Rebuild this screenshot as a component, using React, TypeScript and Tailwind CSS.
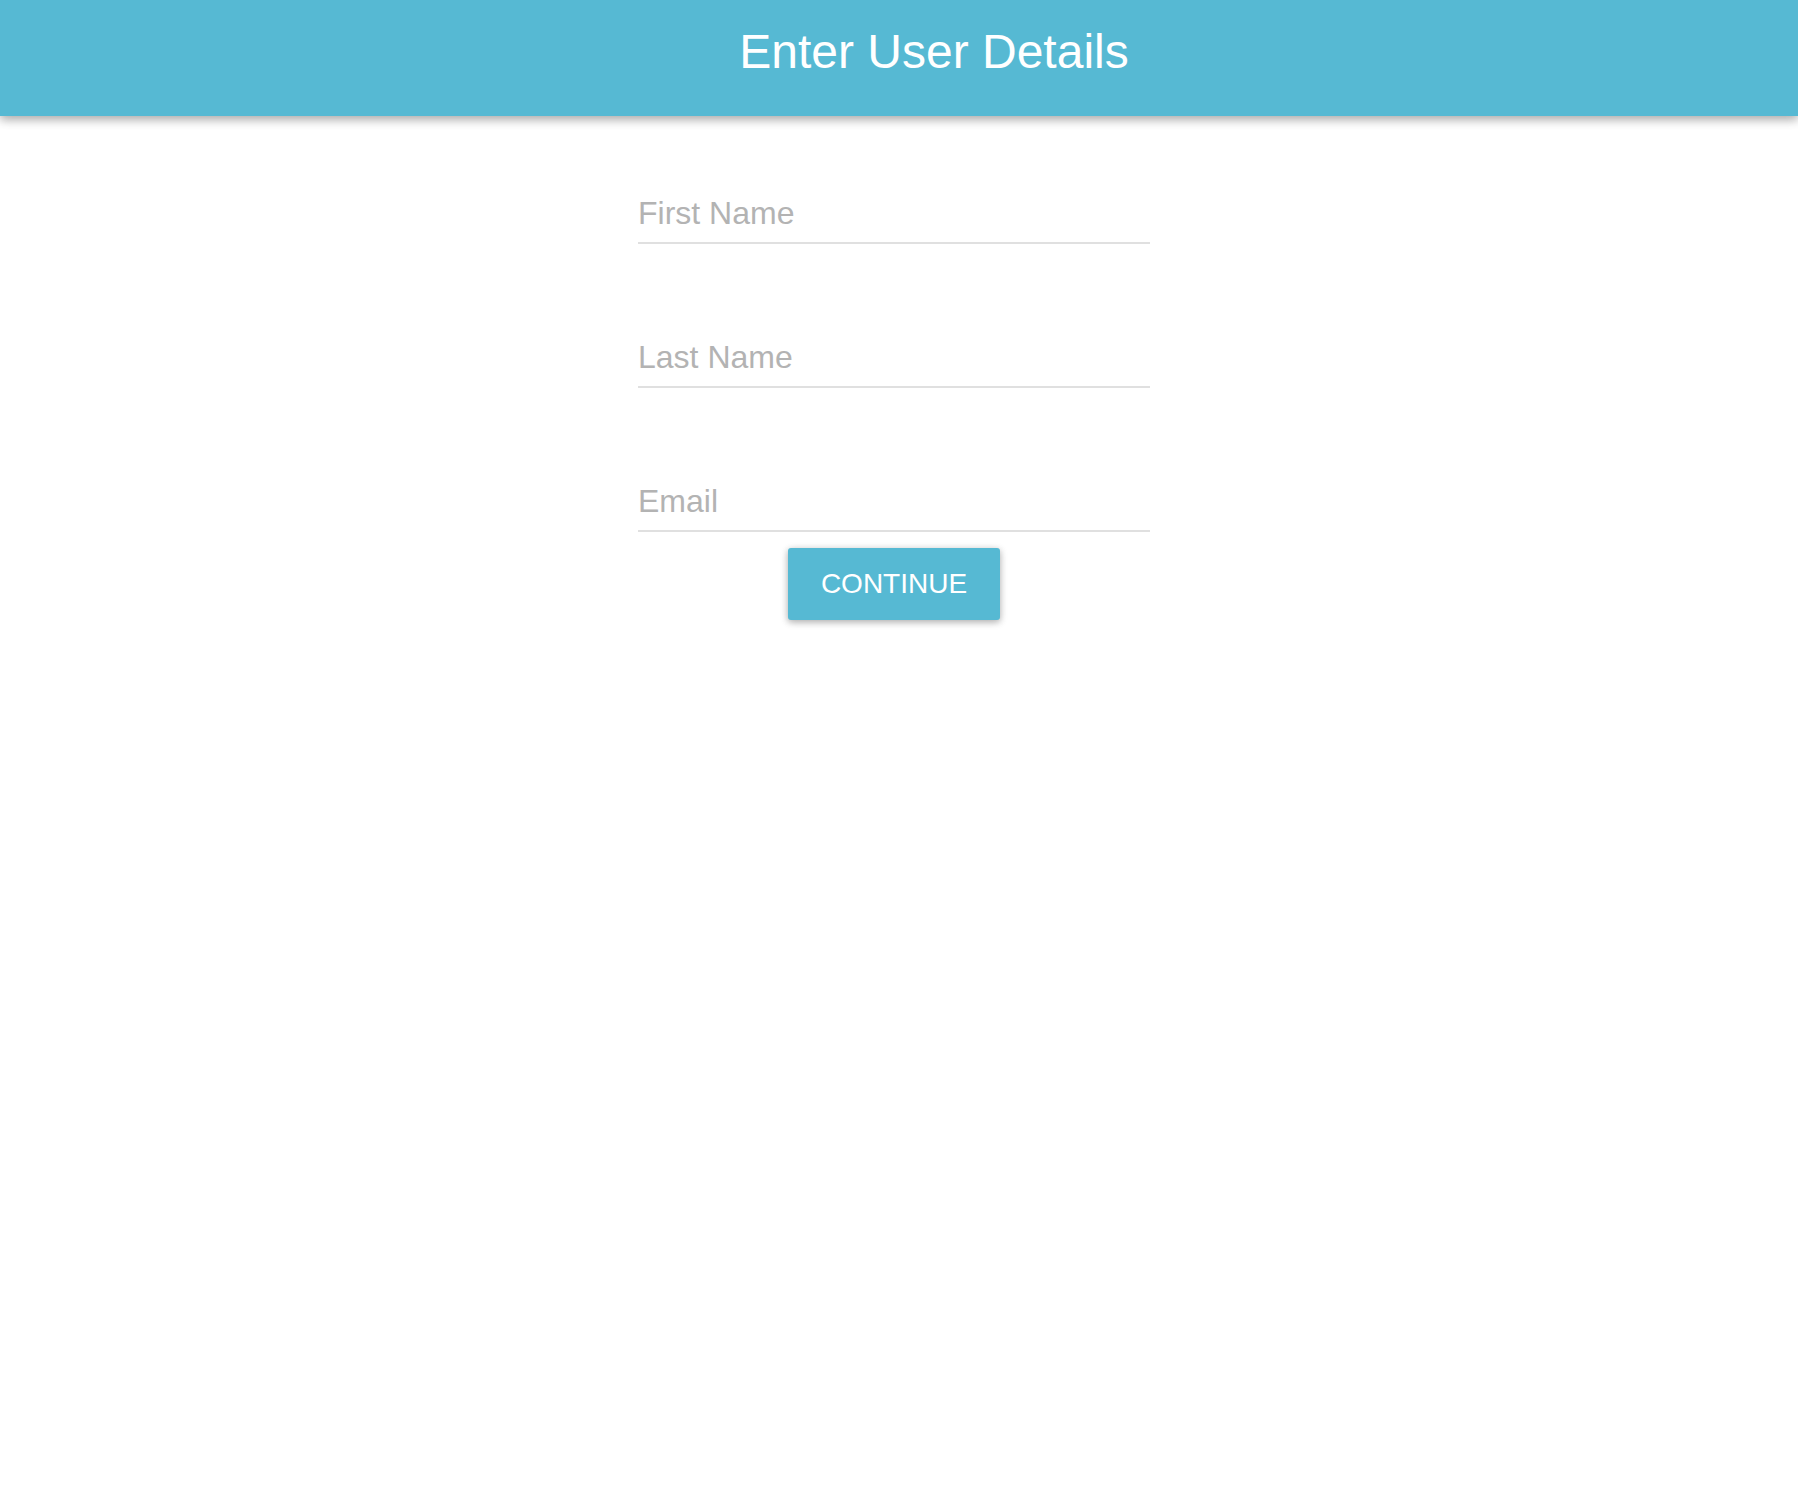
import React from 'react'

const fields = [
  { name: 'firstName', label: 'First Name', type: 'text' },
  { name: 'lastName', label: 'Last Name', type: 'text' },
  { name: 'email', label: 'Email', type: 'email' },
]

export default function App() {
  return (
    <div
      className="min-h-screen bg-white"
      style={{ fontFamily: 'Helvetica, "Liberation Sans", Arial, sans-serif' }}
    >
      {/* App bar */}
      <header className="h-[116px] bg-[#56b9d3] shadow-[0_3px_10px_rgba(0,0,0,0.16),0_3px_10px_rgba(0,0,0,0.23)] relative z-10">
        <div className="h-[104px] flex items-center justify-center pl-[70px]">
          <h1 className="text-[48px] font-normal text-white leading-none">Enter User Details</h1>
        </div>
      </header>

      {/* Form */}
      <main className="flex justify-center pr-[10px] pt-[16px]">
        <form className="w-[512px] flex flex-col" onSubmit={(e) => e.preventDefault()}>
          <div className="flex flex-col gap-[32px]">
            {fields.map((f) => (
              <div key={f.name} className="h-[112px] flex flex-col justify-end">
                <input
                  name={f.name}
                  type={f.type}
                  placeholder={f.label}
                  className="h-[60px] w-full bg-transparent text-[32px] text-[#333] outline-none border-b-2 border-[#e0e0e0] placeholder:text-[#b3b3b3]"
                />
              </div>
            ))}
          </div>
          <div className="flex justify-center mt-[16px]">
            <button
              type="submit"
              className="w-[212px] h-[72px] rounded-[3px] bg-[#56b9d3] text-white text-[28px] shadow-[0_2px_8px_rgba(0,0,0,0.16),0_2px_6px_rgba(0,0,0,0.2)]"
            >
              CONTINUE
            </button>
          </div>
        </form>
      </main>
    </div>
  )
}
